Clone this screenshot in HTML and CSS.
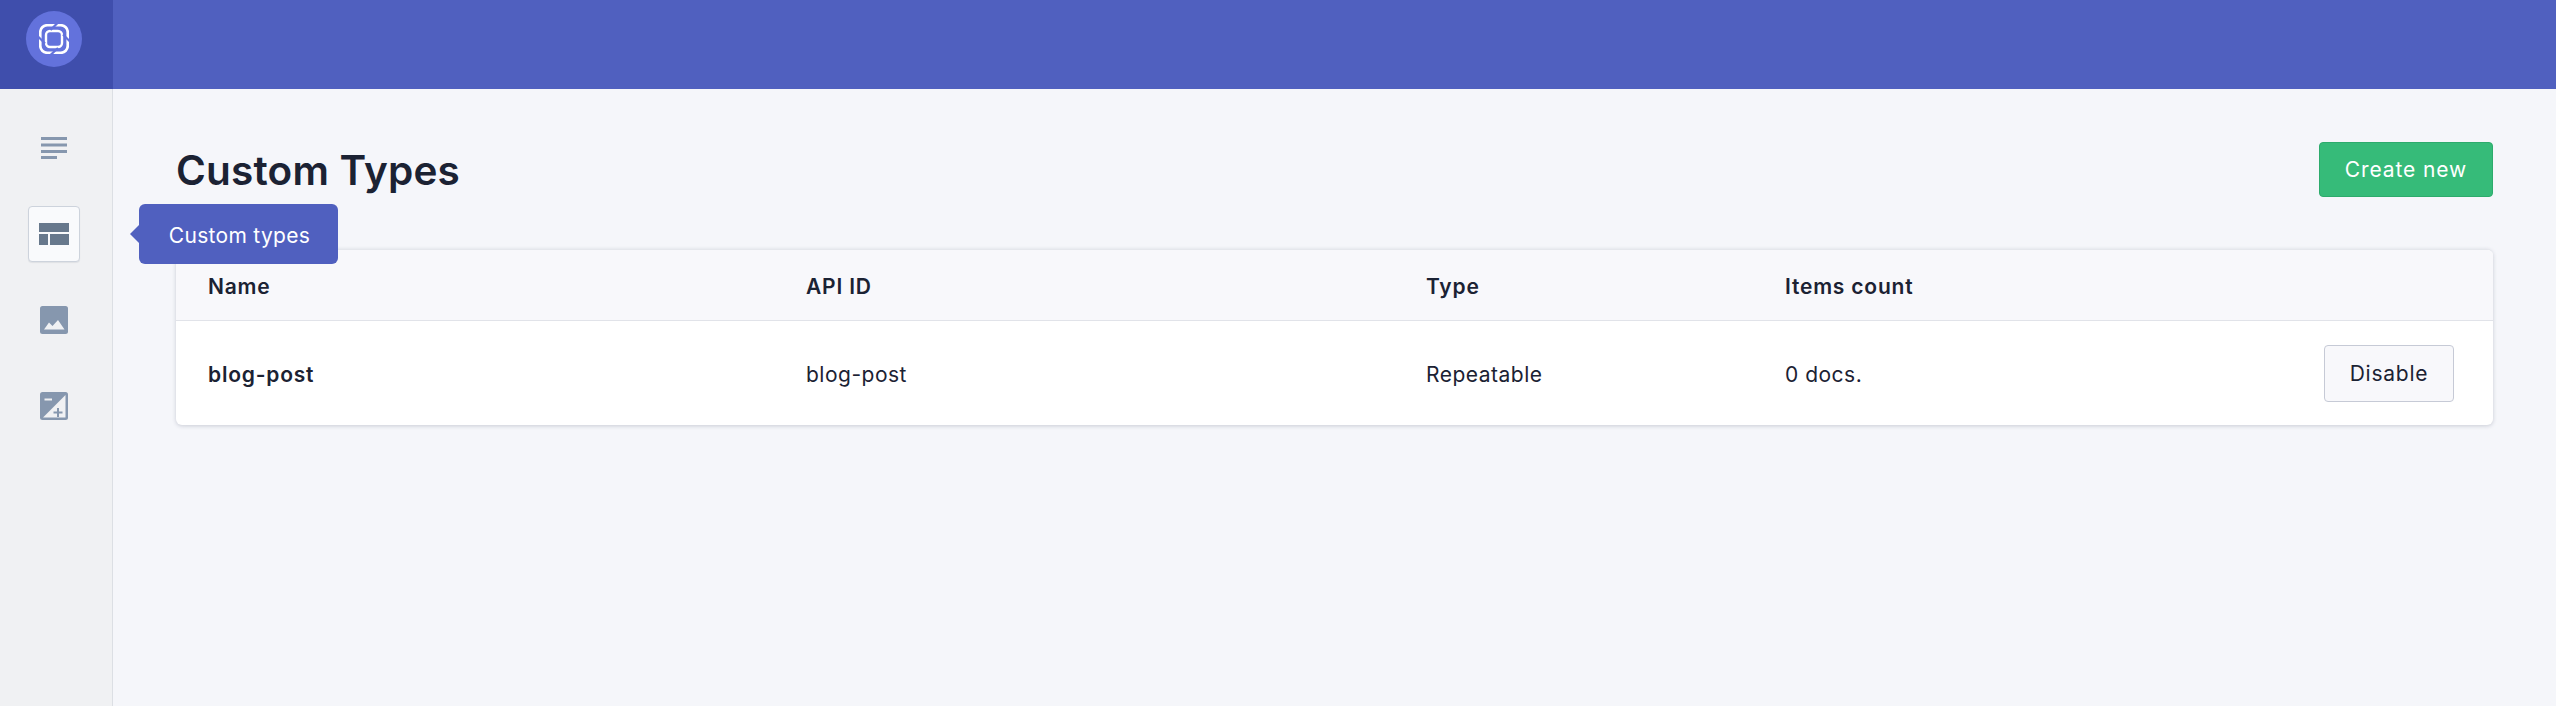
FILE: index.html
```html
<!DOCTYPE html>
<html lang="en">
<head>
<meta charset="utf-8">
<title>Custom Types</title>
<link rel="stylesheet" href="styles.css">
</head>
<body>
<div class="app">
  <header class="topbar">
    <div class="brand">
      <div class="logo">
        <svg width="30" height="30" viewBox="0 0 30 30" fill="none">
          <rect x="1.250" y="1.250" width="27.500" height="27.500" rx="7" stroke="#fff" stroke-width="2.700"/>
          <rect x="7" y="7" width="16" height="16" rx="4" stroke="#fff" stroke-width="2.400"/>
          <path d="M18.500 -1L11.500 6M19 24L11.500 31M-1 12.500L6 19.500M31 17.500L24 10.500" stroke="#6372dc" stroke-width="2.200"/>
        </svg>
      </div>
    </div>
  </header>
  <div class="body">
    <nav class="sidebar">
      <a class="nav-item">
        <svg width="26" height="22" viewBox="0 0 26 22" fill="#8697ae"><path d="M0 0h26v3H0zM0 6.500h26v3H0zM0 13h26v3H0zM0 19h16v3H0z"/></svg>
      </a>
      <a class="nav-item active">
        <svg width="30" height="22" viewBox="0 0 30 22" fill="#67788c"><path d="M0 0h30v9H0zM0 11h9v11H0zM11 11h19v11H11z"/></svg>
        <span class="tooltip">Custom types</span>
      </a>
      <a class="nav-item">
        <svg width="28" height="28" viewBox="0 0 28 28"><rect width="28" height="28" rx="2.500" fill="#8697ae"/><path d="M4 23.500L9 16.500L12.500 20L18 14L24.500 23.500z" fill="#f0f1f3"/></svg>
      </a>
      <a class="nav-item">
        <svg width="28" height="28" viewBox="0 0 28 28"><rect width="28" height="28" rx="2.500" fill="#8697ae"/><path d="M3 25.500L25.500 3v22.500z" fill="#f0f1f3"/><path d="M4.500 6.500h7.500v2H4.500z" fill="#f0f1f3"/><path d="M17 16h2v3.500h3.500v2H19V25h-2v-3.500h-3.500v-2H17z" fill="#8697ae"/></svg>
      </a>
    </nav>
    <main class="content">
      <div class="page-head">
        <h1 class="title">Custom Types</h1>
        <button class="btn btn-primary">Create new</button>
      </div>
      <section class="card">
        <div class="row row-head">
          <div>Name</div>
          <div>API ID</div>
          <div>Type</div>
          <div>Items count</div>
          <div></div>
        </div>
        <div class="row row-body">
          <div class="strong">blog-post</div>
          <div>blog-post</div>
          <div>Repeatable</div>
          <div>0 docs.</div>
          <div class="actions"><button class="btn btn-light">Disable</button></div>
        </div>
      </section>
    </main>
  </div>
</div>
</body>
</html>
```
FILE: styles.css
```css
* { box-sizing: border-box; }
html, body { margin: 0; height: 100%; }
body {
  font-family: Inter, "Liberation Sans", sans-serif;
  color: #1b2233;
  background: #f5f6fa;
  overflow: hidden;
}
.app { display: flex; flex-direction: column; height: 706px; }
.topbar { height: 89px; background: #5060bf; flex: none; display: flex; }
.brand {
  width: 113px;
  background: #3f4eac;
  padding: 11px 0 0 26px;
}
.logo {
  width: 56px;
  height: 56px;
  border-radius: 50%;
  background: #6372dc;
  display: flex;
  align-items: center;
  justify-content: center;
}
.body { display: flex; flex: 1; min-height: 0; }
.sidebar {
  width: 113px;
  flex: none;
  background: #f0f1f3;
  border-right: 1px solid #dcdfe4;
  padding: 31px 4px 0 0;
  display: flex;
  flex-direction: column;
  align-items: center;
  gap: 30px;
}
.nav-item {
  position: relative;
  width: 52px;
  height: 56px;
  display: flex;
  align-items: center;
  justify-content: center;
  border: 1px solid transparent;
  border-radius: 4px;
}
.nav-item.active {
  background: #f9fafc;
  border-color: #cdd3dc;
  box-shadow: 0 1px 1px rgba(30, 40, 70, .08);
}
.tooltip {
  position: absolute;
  left: 110px;
  top: -3px;
  height: 60px;
  width: 199px;
  background: #5060bf;
  border-radius: 6px;
  color: #fff;
  font-size: 21px;
  letter-spacing: .3px;
  padding: 2px 0 0 2px;
  display: flex;
  align-items: center;
  justify-content: center;
  z-index: 5;
}
.tooltip::before {
  content: "";
  position: absolute;
  left: -9px;
  top: 21px;
  border-style: solid;
  border-width: 9px 9px 9px 0;
  border-color: transparent #5060bf transparent transparent;
}
.content { flex: 1; padding: 53px 63px 0; min-width: 0; }
.page-head {
  display: flex;
  justify-content: space-between;
  align-items: flex-start;
  height: 107px;
}
.title {
  margin: 0;
  font-size: 40.500px;
  line-height: 56px;
  font-weight: 600;
  letter-spacing: .2px;
  color: #1b2233;
  padding-top: 1px;
}
.btn {
  font-family: inherit;
  border-radius: 4px;
  font-size: 21px;
  cursor: pointer;
}
.btn-primary {
  width: 174px;
  height: 55px;
  background: #36bb79;
  border: 1px solid #2dab6c;
  color: #fff;
  letter-spacing: .9px;
  padding: 0;
}
.btn-light {
  width: 130px;
  height: 57px;
  background: #f8f8fb;
  border: 1px solid #c6cad6;
  color: #1b2233;
  letter-spacing: .75px;
  padding: 0;
}
.card {
  background: #fff;
  border-radius: 6px;
  border-top: 1px solid #e5e7ec;
  box-shadow: 0 1px 4px rgba(30, 40, 70, .2);
  overflow: hidden;
  font-size: 21px;
  letter-spacing: .5px;
}
.row {
  display: grid;
  grid-template-columns: 598px 620px 359px 1fr 200px;
  align-items: center;
}
.row > div:not(.actions) { padding-left: 32px; padding-top: 2px; }
.row-head {
  height: 71px;
  background: #f8f8fb;
  border-bottom: 1px solid #e1e3e9;
  font-weight: 600;
  letter-spacing: .8px;
}
.row-body { height: 104px; }
.strong { font-weight: 600; letter-spacing: .8px; }
.actions { display: flex; justify-content: flex-end; padding-right: 39px; }
```
